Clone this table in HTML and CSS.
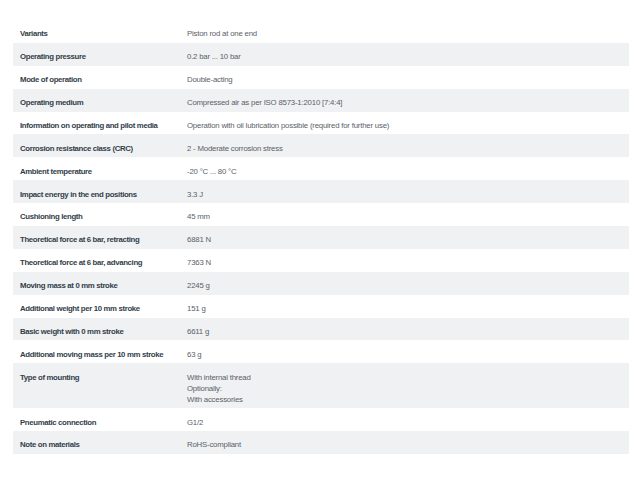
FILE: index.html
```
<!DOCTYPE html>
<html lang="en">
<head>
    <meta charset="UTF-8">
    <title>Technical data</title>
    <link rel="stylesheet" href="styles.css">
</head>
<body>
    <table class="specs">
        <tr><th>Variants</th><td>Piston rod at one end</td></tr>
        <tr><th>Operating pressure</th><td>0.2 bar ... 10 bar</td></tr>
        <tr><th>Mode of operation</th><td>Double-acting</td></tr>
        <tr><th>Operating medium</th><td>Compressed air as per ISO 8573-1:2010 [7:4:4]</td></tr>
        <tr><th>Information on operating and pilot media</th><td>Operation with oil lubrication possible (required for further use)</td></tr>
        <tr><th>Corrosion resistance class (CRC)</th><td>2 - Moderate corrosion stress</td></tr>
        <tr><th>Ambient temperature</th><td>-20 °C ... 80 °C</td></tr>
        <tr><th>Impact energy in the end positions</th><td>3.3 J</td></tr>
        <tr><th>Cushioning length</th><td>45 mm</td></tr>
        <tr><th>Theoretical force at 6 bar, retracting</th><td>6881 N</td></tr>
        <tr><th>Theoretical force at 6 bar, advancing</th><td>7363 N</td></tr>
        <tr><th>Moving mass at 0 mm stroke</th><td>2245 g</td></tr>
        <tr><th>Additional weight per 10 mm stroke</th><td>151 g</td></tr>
        <tr><th>Basic weight with 0 mm stroke</th><td>6611 g</td></tr>
        <tr><th>Additional moving mass per 10 mm stroke</th><td>63 g</td></tr>
        <tr><th>Type of mounting</th><td>With internal thread<br>Optionally:<br>With accessories</td></tr>
        <tr><th>Pneumatic connection</th><td>G1/2</td></tr>
        <tr><th>Note on materials</th><td>RoHS-compliant</td></tr>
    </table>
</body>
</html>
```
FILE: styles.css
```
body {
    margin: 0;
    padding: 20px 11px 0 13px;
    background-color: #ffffff;
    font-family: "Liberation Sans Narrow", "Liberation Sans", Arial, sans-serif;
    font-size: 7.8px;
}

/* tabela de dados tecnicos */
.specs {
    width: 616px;
    border-collapse: collapse;
}

.specs tr:nth-child(even) {
    background-color: #f0f1f3;
}

.specs th,
.specs td {
    padding: 8.3px 7px 3.6px;
    line-height: 11px;
    text-align: left;
    vertical-align: top;
}

.specs th {
    width: 153px;
    font-weight: bold;
    letter-spacing: -0.35px;
    color: #333e49;
}

.specs td {
    letter-spacing: -0.2px;
    color: #5a6168;
}
```
